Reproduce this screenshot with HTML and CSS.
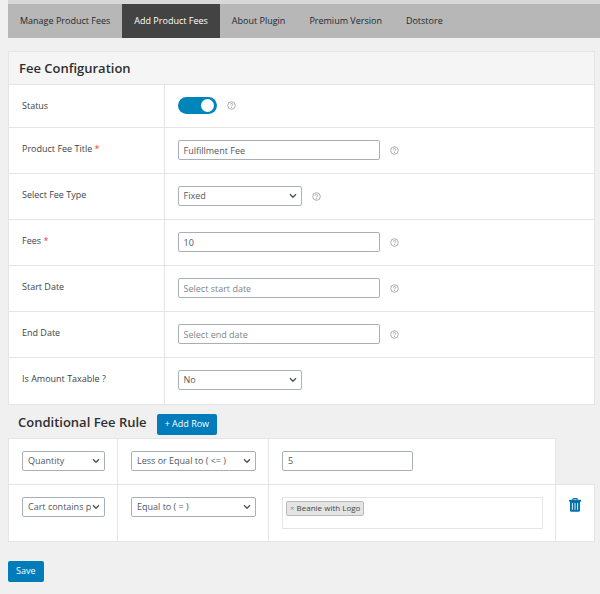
FILE: index.html
```html
<!DOCTYPE html>
<html lang="en">
<head>
    <meta charset="UTF-8">
    <meta name="viewport" content="width=device-width, initial-scale=1.0">
    <title>Add Product Fees</title>
    <link rel="stylesheet" href="styles.css">
</head>
<body>
    <svg class="sprite" aria-hidden="true">
        <symbol id="icon-help" viewBox="0 0 18 18">
            <circle cx="9" cy="9" r="7.6" fill="none" stroke="currentColor" stroke-width="1.6"/>
            <path d="M6.4 7.2C6.5 5.6 7.6 4.8 9 4.8s2.6.8 2.6 2.2c0 1.8-2.4 1.9-2.4 3.7" fill="none" stroke="currentColor" stroke-width="1.6"/>
            <circle cx="9.1" cy="12.9" r="1.1" fill="currentColor"/>
        </symbol>
    </svg>

    <header class="header">
        <nav class="menu">
            <a class="menu-link" href="#manage">Manage Product Fees</a>
            <a class="menu-link active" href="#add" aria-current="page">Add Product Fees</a>
            <a class="menu-link" href="#about">About Plugin</a>
            <a class="menu-link" href="#premium">Premium Version</a>
            <a class="menu-link" href="#dotstore">Dotstore</a>
        </nav>
    </header>

    <main class="content">
        <form>
            <section class="panel">
                <h2 class="panel-title">Fee Configuration</h2>
                <table class="form-table">
                    <tbody>
                        <tr class="status-row">
                            <th scope="row"><label for="status">Status</label></th>
                            <td>
                                <div class="field">
                                    <input class="switch" type="checkbox" id="status" checked>
                                    <svg class="help"><use href="#icon-help"/></svg>
                                </div>
                            </td>
                        </tr>
                        <tr>
                            <th scope="row"><label for="title">Product Fee Title <span class="required">*</span></label></th>
                            <td>
                                <div class="field">
                                    <input class="control wide" type="text" id="title" value="Fulfillment Fee">
                                    <svg class="help"><use href="#icon-help"/></svg>
                                </div>
                            </td>
                        </tr>
                        <tr>
                            <th scope="row"><label for="type">Select Fee Type</label></th>
                            <td>
                                <div class="field">
                                    <select class="control" id="type">
                                        <option>Fixed</option>
                                        <option>Percentage</option>
                                    </select>
                                    <svg class="help"><use href="#icon-help"/></svg>
                                </div>
                            </td>
                        </tr>
                        <tr>
                            <th scope="row"><label for="fees">Fees <span class="required">*</span></label></th>
                            <td>
                                <div class="field">
                                    <input class="control wide" type="text" id="fees" value="10">
                                    <svg class="help"><use href="#icon-help"/></svg>
                                </div>
                            </td>
                        </tr>
                        <tr>
                            <th scope="row"><label for="start">Start Date</label></th>
                            <td>
                                <div class="field">
                                    <input class="control wide" type="text" id="start" placeholder="Select start date">
                                    <svg class="help"><use href="#icon-help"/></svg>
                                </div>
                            </td>
                        </tr>
                        <tr>
                            <th scope="row"><label for="end">End Date</label></th>
                            <td>
                                <div class="field">
                                    <input class="control wide" type="text" id="end" placeholder="Select end date">
                                    <svg class="help"><use href="#icon-help"/></svg>
                                </div>
                            </td>
                        </tr>
                        <tr>
                            <th scope="row"><label for="taxable">Is Amount Taxable ?</label></th>
                            <td>
                                <div class="field">
                                    <select class="control" id="taxable">
                                        <option>No</option>
                                        <option>Yes</option>
                                    </select>
                                </div>
                            </td>
                        </tr>
                    </tbody>
                </table>
            </section>

            <section class="rules">
                <div class="rules-head">
                    <h2 class="rules-title">Conditional Fee Rule</h2>
                    <button class="button" type="button">+ Add Row</button>
                </div>
                <table class="rules-table">
                    <colgroup>
                        <col class="col-condition">
                        <col class="col-operator">
                        <col>
                        <col class="col-delete">
                    </colgroup>
                    <tbody>
                        <tr>
                            <td>
                                <select class="control full" aria-label="Condition">
                                    <option>Quantity</option>
                                </select>
                            </td>
                            <td>
                                <select class="control full" aria-label="Operator">
                                    <option>Less or Equal to ( &lt;= )</option>
                                </select>
                            </td>
                            <td><input class="control half" type="text" value="5" aria-label="Value"></td>
                        </tr>
                        <tr>
                            <td>
                                <select class="control full" aria-label="Condition">
                                    <option>Cart contains product</option>
                                </select>
                            </td>
                            <td>
                                <select class="control full" aria-label="Operator">
                                    <option>Equal to ( = )</option>
                                </select>
                            </td>
                            <td>
                                <div class="tags">
                                    <span class="tag"><button class="tag-remove" type="button" aria-label="Remove">×</button>Beanie with Logo</span>
                                </div>
                            </td>
                            <td class="delete-cell">
                                <button class="delete" type="button" aria-label="Delete row">
                                    <svg viewBox="0 0 12 14">
                                        <path d="M3.8 2V1.4Q3.8.7 4.5.7h3q.7 0 .7.7V2" fill="none" stroke="currentColor" stroke-width="1.2"/>
                                        <path d="M0 1.8h12v1.8H0z" fill="currentColor"/>
                                        <path d="M1 3h10v9.4q0 1.4-1.4 1.4H2.4Q1 13.8 1 12.4z" fill="currentColor"/>
                                        <path d="M3.4 5v6.8M6 5v6.8M8.6 5v6.8" stroke="#fff" stroke-width="0.9"/>
                                    </svg>
                                </button>
                            </td>
                        </tr>
                    </tbody>
                </table>
            </section>

            <button class="button" type="submit">Save</button>
        </form>
    </main>
</body>
</html>
```
FILE: styles.css
```css
* {
    margin: 0;
    padding: 0;
    box-sizing: border-box;
}

body {
    font-family: 'Segoe UI', 'Open Sans', 'Noto Sans', sans-serif;
    font-size: 9px;
    line-height: 14px;
    color: #3c434a;
    background: #f0f0f0;
}

.sprite {
    display: none;
}

.header {
    margin-left: 8px;
    border-top: 4px solid #d8d8d8;
}

.menu {
    display: flex;
    background: #b7b7b7;
}

.menu-link {
    padding: 10px 12px;
    color: #23282d;
    text-decoration: none;
}

.menu-link.active {
    background: #434343;
    color: #fff;
}

.content {
    padding: 13px 5px 12px 8px;
}

.panel {
    border: 1px solid #e5e5e5;
    background: #f5f5f5;
}

.panel-title,
.rules-title {
    font-size: 13px;
    font-weight: 600;
    line-height: 20px;
    color: #2f2f2f;
}

.panel-title {
    padding: 6px 10px;
}

.rules-title {
    line-height: 16px;
}

table {
    width: 100%;
    table-layout: fixed;
    border-collapse: collapse;
}

.form-table th,
.form-table td {
    height: 46px;
    padding: 12px 13px;
    border-top: 1px solid #e5e5e5;
    background: #fff;
    text-align: left;
    vertical-align: top;
}

.form-table th {
    width: 155px;
    padding-top: 14px;
    border-right: 1px solid #e5e5e5;
    font-weight: 500;
}

.form-table .status-row th,
.form-table .status-row td {
    height: 43px;
}

.required {
    color: #f33;
}

.field {
    display: flex;
    align-items: center;
    gap: 10px;
}

.control {
    width: 124px;
    height: 20px;
    padding: 0 5px;
    border: 1px solid #a9afb8;
    border-radius: 2px;
    background: #fff;
    color: #50575e;
    font: inherit;
}

.control.wide {
    width: 202px;
}

.control.full {
    width: 100%;
}

.control.half {
    width: 50%;
}

.control::placeholder {
    color: #80868c;
}

select.control {
    appearance: none;
    padding-right: 13px;
    background: #fff url("data:image/svg+xml,%3Csvg xmlns='http://www.w3.org/2000/svg' viewBox='0 0 8 6'%3E%3Cpath d='M1 1.2l3 3 3-3' fill='none' stroke='%23555' stroke-width='1.4'/%3E%3C/svg%3E") no-repeat right 4px center / 8px 6px;
}

.switch {
    appearance: none;
    display: flex;
    justify-content: flex-end;
    width: 39px;
    height: 17px;
    padding: 2px 3px;
    border-radius: 9px;
    background: #0085ba;
    cursor: pointer;
}

.switch::before {
    content: '';
    width: 13px;
    height: 13px;
    border-radius: 50%;
    background: #fff;
}

.switch:not(:checked) {
    justify-content: flex-start;
    background: #ccc;
}

.help {
    width: 9px;
    height: 9px;
    color: #999;
}

.rules-head {
    display: flex;
    align-items: flex-start;
    gap: 10px;
    padding: 9px 10px 3px;
}

.button {
    height: 21px;
    padding: 0 8px;
    border: 0;
    border-radius: 2px;
    background: #007cba;
    color: #fff;
    font: inherit;
    cursor: pointer;
}

.rules-table {
    margin-bottom: 19px;
}

.rules-table td {
    height: 46px;
    padding: 12px 12px 12px 13px;
    border: 1px solid #e5e5e5;
    background: #fff;
    vertical-align: top;
}

.rules-table .control {
    display: block;
}

.rules-table .control.half {
    width: 50%;
}

.col-condition {
    width: 109px;
}

.col-operator {
    width: 151px;
}

.col-delete {
    width: 39px;
}

.tags {
    height: 32px;
    padding: 3px;
    border: 1px solid #e5e5e5;
}

.tag {
    display: inline-flex;
    align-items: center;
    height: 15px;
    padding: 0 3px;
    border: 1px solid #bbb;
    border-radius: 2px;
    background: #e4e4e4;
    color: #444;
    font-size: 8px;
}

.tag-remove {
    padding-right: 2px;
    border: 0;
    background: none;
    color: #888;
    font: inherit;
    cursor: pointer;
}

.rules-table .delete-cell {
    padding: 13px 0;
    text-align: center;
}

.delete {
    border: 0;
    background: none;
    color: #0073aa;
    cursor: pointer;
}

.delete svg {
    display: block;
    width: 12px;
    height: 14px;
}
```
